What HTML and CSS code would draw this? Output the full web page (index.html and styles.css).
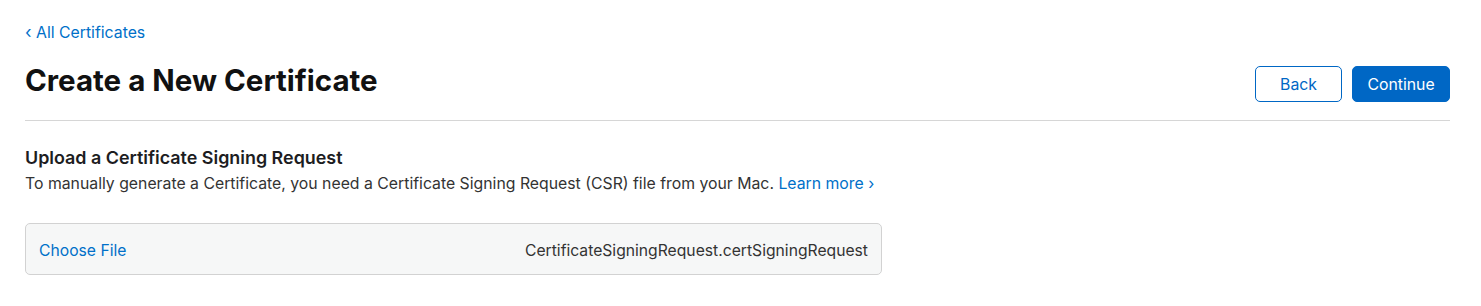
FILE: index.html
```html
<!DOCTYPE html>
<html lang="en">
<head>
<meta charset="utf-8">
<title>Create a New Certificate</title>
<link rel="stylesheet" href="styles.css">
</head>
<body>
<main class="page">
  <a class="back-link" href="#"><span class="chev">‹</span> All Certificates</a>
  <header class="page-header">
    <h1 class="title">Create a New Certificate</h1>
    <div class="actions">
      <button class="btn btn-secondary" type="button">Back</button>
      <button class="btn btn-primary" type="button">Continue</button>
    </div>
  </header>
  <section class="section">
    <h2 class="section-title">Upload a Certificate Signing Request</h2>
    <p class="section-desc">To manually generate a Certificate, you need a Certificate Signing Request (CSR) file from your Mac. <a class="link" href="#">Learn more ›</a></p>
    <div class="file-box">
      <a class="link choose" href="#">Choose File</a>
      <span class="file-name">CertificateSigningRequest.certSigningRequest</span>
    </div>
  </section>
</main>
</body>
</html>
```
FILE: styles.css
```css
html, body {
  margin: 0;
  padding: 0;
  background: #ffffff;
}
body {
  font-family: Inter, "Noto Sans", "Liberation Sans", sans-serif;
  color: #1d1d1f;
  -webkit-font-smoothing: antialiased;
}
.page {
  width: 1425px;
  padding: 22px 0 0 25px;
}
a { text-decoration: none; }
.back-link {
  display: inline-block;
  font-size: 15.8px;
  line-height: 20px;
  color: #0070c9;
}
.chev { font-size: 17px; }
.page-header {
  display: flex;
  align-items: center;
  justify-content: space-between;
  padding: 15px 0 18px;
  border-bottom: 1px solid #d6d6d6;
}
.title {
  margin: 0;
  font-size: 29.5px;
  line-height: 34px;
  font-weight: 700;
  color: #111111;
}
.actions {
  display: flex;
  gap: 10px;
  margin-top: 8px;
}
.btn {
  font-family: inherit;
  font-size: 15.8px;
  height: 36px;
  border-radius: 5px;
  padding: 0;
  cursor: pointer;
}
.btn-secondary {
  width: 87px;
  background: #ffffff;
  border: 1px solid #0067c5;
  color: #0067c5;
}
.btn-primary {
  width: 98px;
  background: #0067c5;
  border: 1px solid #0067c5;
  color: #ffffff;
}
.section {
  padding-top: 26px;
}
.section-title {
  margin: 0;
  font-size: 17.9px;
  line-height: 22px;
  font-weight: 600;
  color: #1d1d1f;
}
.section-desc {
  margin: 5px 0 0;
  font-size: 15.8px;
  line-height: 20px;
  color: #333333;
}
.link { color: #0070c9; }
.file-box {
  margin-top: 29px;
  width: 857px;
  height: 52px;
  box-sizing: border-box;
  display: flex;
  align-items: center;
  justify-content: space-between;
  padding: 3px 13px 0;
  background: #f6f7f7;
  border: 1px solid #d2d2d2;
  border-radius: 5px;
  font-size: 15.7px;
}
.file-name { color: #333333; }
```
